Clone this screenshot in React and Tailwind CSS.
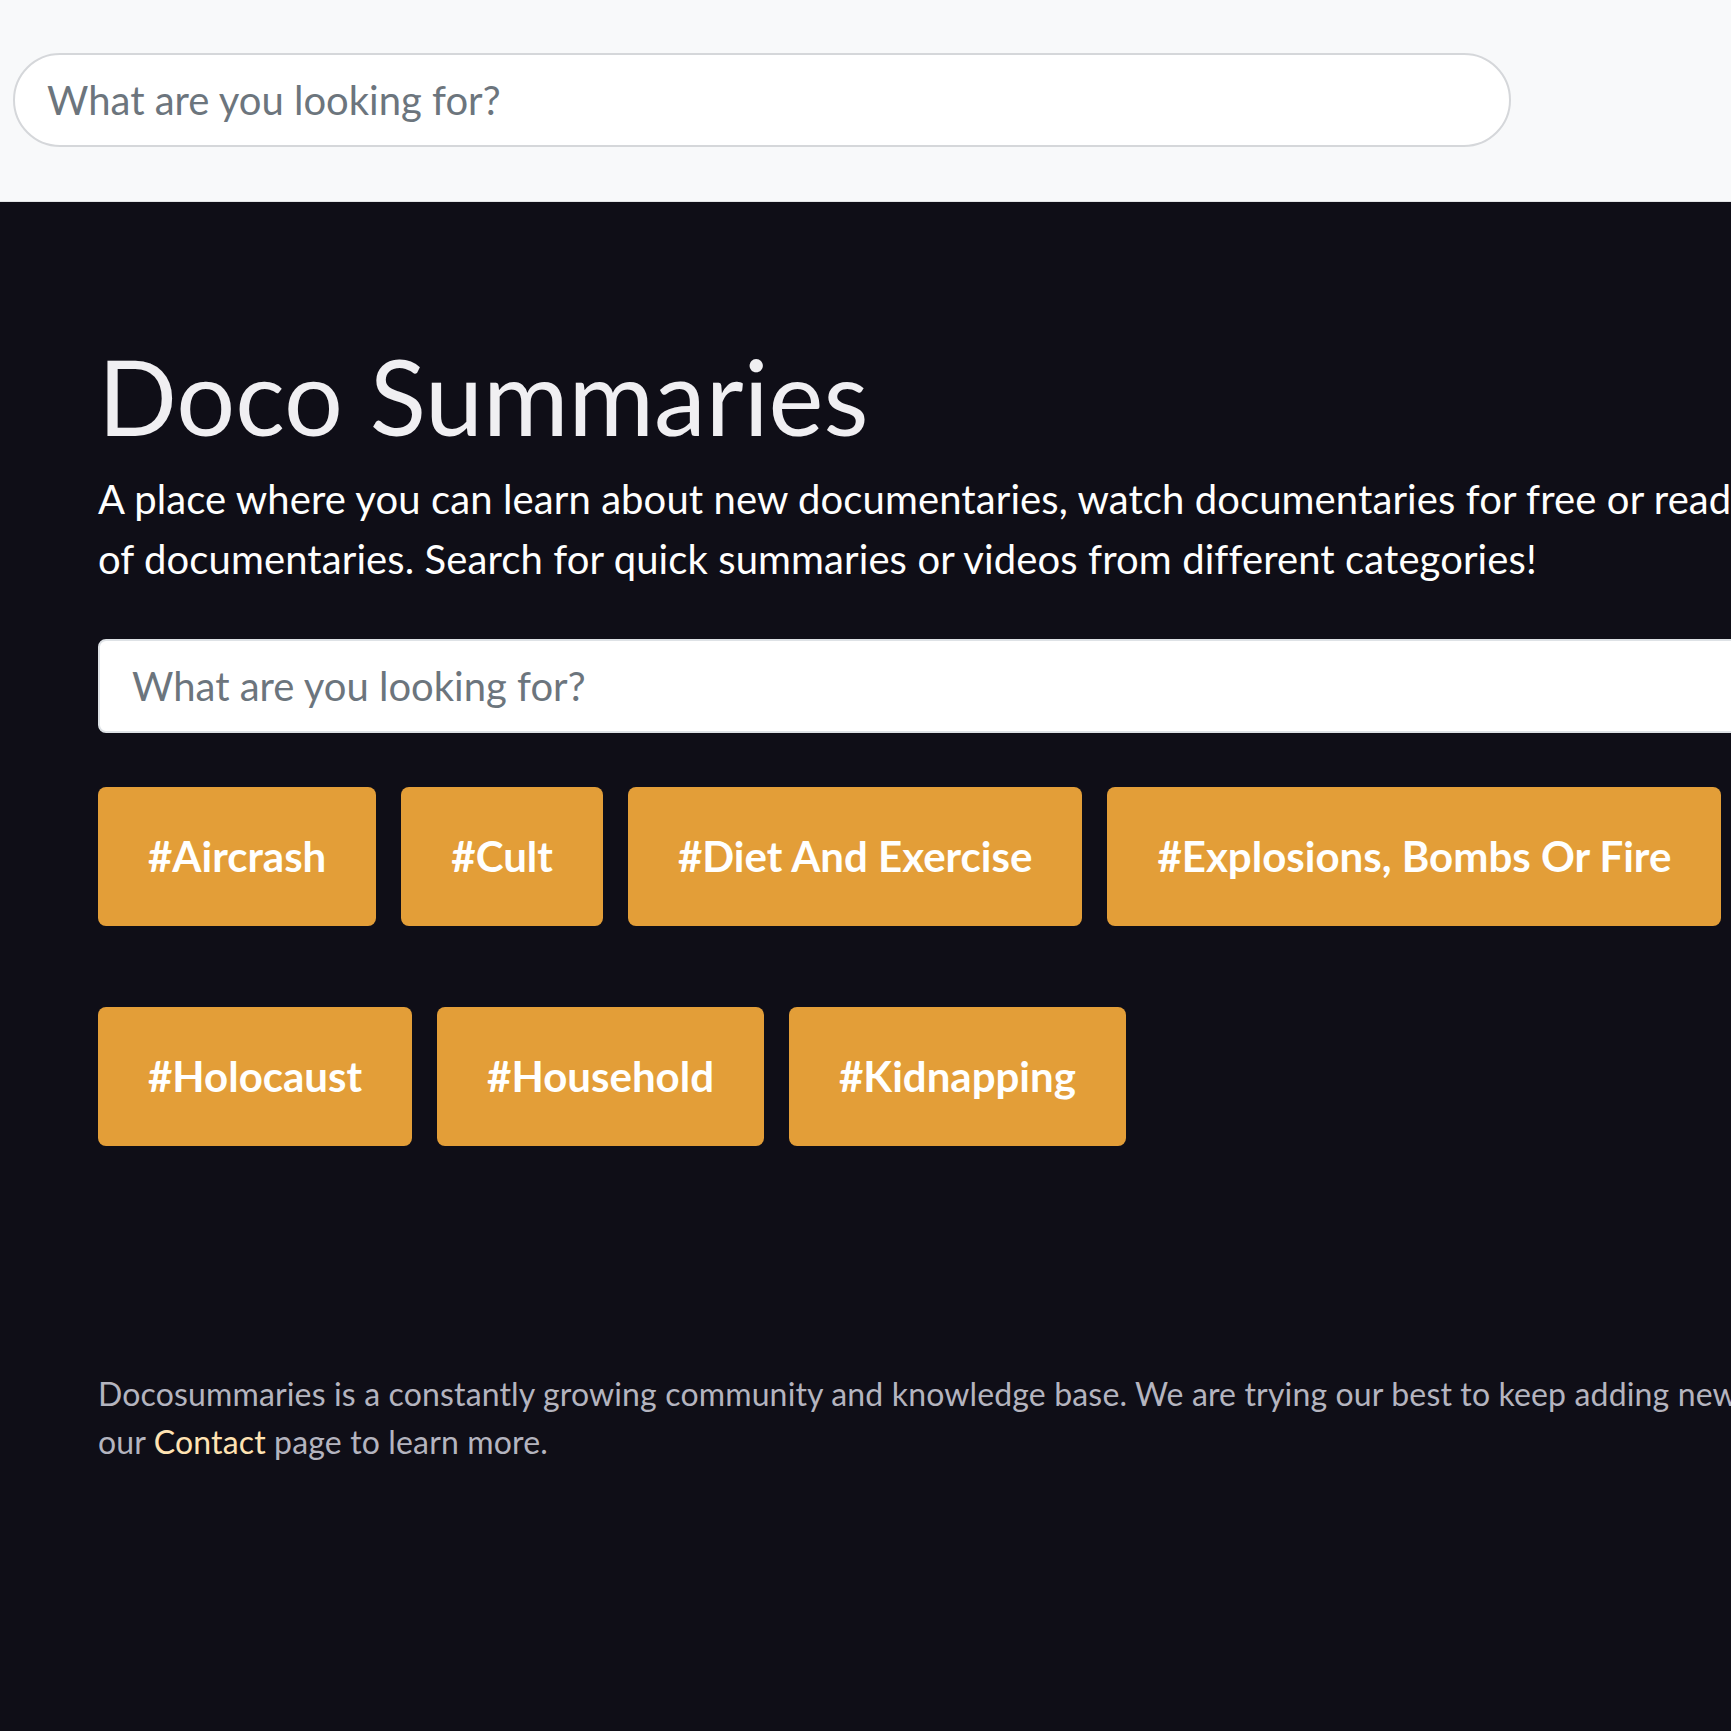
import { useState } from 'react'

const tags = [
  ['#Aircrash', '#Cult', '#Diet And Exercise', '#Explosions, Bombs Or Fire'],
  ['#Holocaust', '#Household', '#Kidnapping'],
]

const App = () => {
  const [query, setQuery] = useState('')
  const [topQuery, setTopQuery] = useState('')

  return (
    <div className="min-h-screen bg-[#0f0e17] overflow-hidden font-['Lato',sans-serif]">
      {/* Top search bar */}
      <div className="bg-[#f8f9fa] h-[202px] pl-[13px] pt-[53px] border-b border-[#e3e4e6]">
        <input
          value={topQuery}
          onChange={e => setTopQuery(e.target.value)}
          placeholder="What are you looking for?"
          className="w-[1498px] h-[94px] rounded-full bg-white border-2 border-[#d5d7da] px-[32px] text-[40px] text-[#212529] placeholder:text-[#6c757d] outline-none"
        />
      </div>

      <div className="px-[98px] pt-[132px] pb-[200px]">
        <h1 className="text-[104px] leading-[1.2] text-[#f0eff2] font-normal">Doco Summaries</h1>
        <p className="mt-[10px] text-[40px] leading-[1.5] text-[#fffffe] tracking-[0.1px] whitespace-nowrap">
          A place where you can learn about new documentaries, watch documentaries for free or read summaries
          <br />
          of documentaries. Search for quick summaries or videos from different categories!
        </p>

        <input
          value={query}
          onChange={e => setQuery(e.target.value)}
          placeholder="What are you looking for?"
          className="mt-[50px] w-[1900px] h-[94px] rounded-[8px] bg-white border-2 border-[#dee2e6] px-[32px] text-[40px] text-[#212529] placeholder:text-[#6c757d] outline-none"
        />

        {/* Category tags */}
        <div className="mt-[54px] flex flex-col gap-[81px]">
          {tags.map((row, i) => (
            <div key={i} className="flex gap-[25px]">
              {row.map(t => (
                <button
                  key={t}
                  className="h-[139px] px-[50px] rounded-[8px] bg-[#e39e38] text-[#fffffe] text-[42px] font-bold whitespace-nowrap"
                >
                  {t}
                </button>
              ))}
            </div>
          ))}
        </div>

        <p className="mt-[224px] text-[32px] leading-[1.5] text-[#b4b4bf] tracking-[0.15px] whitespace-nowrap">
          Docosummaries is a constantly growing community and knowledge base. We are trying our best to keep adding new content. Please visit
          <br />
          our <a href="#" className="text-[#ffe3b3]">Contact</a> page to learn more.
        </p>
      </div>
    </div>
  )
}

export default App
